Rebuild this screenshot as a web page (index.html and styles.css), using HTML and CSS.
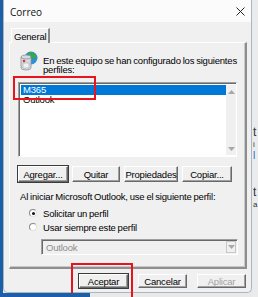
FILE: index.html
```html
<!DOCTYPE html>
<html lang="es">
<head>
<meta charset="utf-8">
<title>Correo</title>
<link rel="stylesheet" href="styles.css">
</head>
<body>
<div class="screen">
  <div class="dialog">
    <div class="titlebar">
      <span class="title">Correo</span>
      <svg class="close" width="9" height="9" viewBox="0 0 9 9"><path d="M0.5 0.5L8.5 8.5M8.5 0.5L0.5 8.5" stroke="#222" stroke-width="1"/></svg>
    </div>
    <div class="body">
      <div class="tabs"><div class="tab">General</div></div>
      <div class="panel">
        <div class="intro">
          <svg class="icon" width="20" height="22" viewBox="0 0 20 22">
            <circle cx="13" cy="8" r="6.5" fill="#2f8fd0"/>
            <path d="M9 3 C12 4 13 7 11 9 C14 9 16 7 18 9 C19 6 17 3 13 2 Z" fill="#3aa84a"/>
            <path d="M3 7 Q3 5 8 5 Q13 5 13 7 L13 18 Q13 20 8 20 Q3 20 3 18 Z" fill="#d7dbe0" stroke="#8c9399" stroke-width="0.8"/>
            <path d="M3 7 Q3 9 8 9 Q13 9 13 7" fill="none" stroke="#8c9399" stroke-width="0.8"/>
            <circle cx="6" cy="11" r="1.3" fill="#e0302a"/>
            <rect x="5" y="13" width="6" height="5" fill="#eef0f2" stroke="#9aa1a8" stroke-width="0.5"/>
          </svg>
          <div class="intro-text">En este equipo se han configurado los siguientes perfiles:</div>
        </div>
        <div class="listbox">
          <div class="items">
            <div class="item selected">M365</div>
            <div class="item">Outlook</div>
          </div>
          <div class="scrollbar">
            <svg width="7" height="4" viewBox="0 0 7 4"><path d="M0 4L3.5 0L7 4Z" fill="#a8a8a8"/></svg>
            <svg width="7" height="4" viewBox="0 0 7 4"><path d="M0 0L3.5 4L7 0Z" fill="#a8a8a8"/></svg>
          </div>
        </div>
        <div class="btnrow">
          <button class="btn focus w50">Agregar...</button>
          <button class="btn w48">Quitar</button>
          <button class="btn w54">Propiedades</button>
          <button class="btn w50">Copiar...</button>
        </div>
        <div class="label">Al iniciar Microsoft Outlook, use el siguiente perfil:</div>
        <div class="radio"><span class="dot checked"></span>Solicitar un perfil</div>
        <div class="radio"><span class="dot"></span>Usar siempre este perfil</div>
        <div class="combo">
          <span class="combo-text">Outlook</span>
          <span class="combo-btn"><svg width="7" height="4" viewBox="0 0 7 4"><path d="M0 0L3.5 4L7 0Z" fill="#a8a8a8"/></svg></span>
        </div>
      </div>
      <div class="footer">
        <button class="btn default w49">Aceptar</button>
        <button class="btn w49">Cancelar</button>
        <button class="btn disabled w49">Aplicar</button>
      </div>
    </div>
  </div>
  <div class="behind">
    <span class="frag f1">t</span>
    <span class="frag f2">i</span>
    <span class="frag f3">l</span>
    <span class="frag f4">t</span>
    <span class="frag f5">a</span>
  </div>
  <div class="mark mark-list"></div>
  <div class="mark mark-ok"></div>
</div>
</body>
</html>
```

FILE: styles.css
```css
* { box-sizing: border-box; }
html, body { margin: 0; padding: 0; }
body {
  font-family: "Liberation Sans", Arial, sans-serif;
  font-size: 9.5px;
  letter-spacing: -0.2px;
  word-spacing: -0.5px;
  color: #000;
  background: #e8e8e8;
}
.screen {
  position: relative;
  width: 258px;
  height: 297px;
  overflow: hidden;
  display: flex;
  align-items: flex-start;
  padding-left: 3px;
  background: linear-gradient(to right, #1d5fa6 0 3px, #e9e9e9 3px);
}
.screen::after {
  content: "";
  position: absolute;
  left: 0;
  bottom: 0;
  width: 90px;
  height: 4px;
  background: #1d5fa6;
}
.dialog {
  width: 249px;
  height: 293px;
  background: #f0f0f0;
  border: 1px solid #a9b6c4;
  border-top: none;
  border-radius: 0 0 5px 5px;
  display: flex;
  flex-direction: column;
}
.titlebar {
  height: 22px;
  background: #fbfbfb;
  display: flex;
  align-items: center;
  justify-content: space-between;
  padding: 1px 6px 0 6px;
}
.title {
  font-family: "Open Sans", "Noto Sans", sans-serif;
  font-size: 10px;
  letter-spacing: 0;
  color: #111;
}
.close { display: block; }
.body {
  padding: 6px 4px 0 5px;
  display: flex;
  flex-direction: column;
}
.tabs {
  display: flex;
  padding-left: 2px;
  height: 14px;
}
.tab {
  width: 39px;
  height: 15px;
  background: #f0f0f0;
  border: 1px solid #fff;
  border-right: 2px solid #8a8a8a;
  border-bottom: none;
  padding: 2px 0 0 2px;
  position: relative;
  z-index: 1;
}
.panel {
  width: 238px;
  height: 227px;
  border-top: 1px solid #fff;
  border-left: 1px solid #fff;
  border-right: 2px solid #8e8e8e;
  border-bottom: 2px solid #8e8e8e;
  box-shadow: inset -1px -1px 0 #c8c8c8;
  padding: 6px 0 0 8px;
  display: flex;
  flex-direction: column;
}
.intro {
  display: flex;
  gap: 5px;
  height: 28px;
}
.icon { flex: none; margin-top: 1px; }
.intro-text {
  width: 200px;
  padding-top: 7px;
  line-height: 9px;
}
.listbox {
  margin-top: 5px;
  width: 219px;
  height: 75px;
  background: #fff;
  border-top: 1px solid #a0a0a0;
  border-left: 1px solid #a0a0a0;
  border-right: 1px solid #fff;
  border-bottom: 1px solid #fff;
  box-shadow: inset 1px 1px 0 #696969;
  display: flex;
  padding: 2px 0 1px 2px;
}
.items { flex: 1; }
.item {
  height: 10px;
  line-height: 10px;
  padding-left: 2px;
}
.item.selected {
  background: #0078d7;
  color: #fff;
}
.scrollbar {
  width: 10px;
  background: #f0f0f0;
  display: flex;
  flex-direction: column;
  align-items: center;
  justify-content: space-between;
  padding: 5px 0 4px;
}
.scrollbar svg { display: block; }
.btnrow {
  display: flex;
  gap: 4px;
  margin-top: 9px;
}
.btn {
  font: inherit;
  letter-spacing: inherit;
  color: #000;
  height: 16px;
  padding: 0;
  background: #f0f0f0;
  border-top: 1px solid #fff;
  border-left: 1px solid #fff;
  border-right: 1px solid #696969;
  border-bottom: 1px solid #696969;
  box-shadow: inset -1px -1px 0 #a0a0a0;
  border-radius: 0;
  line-height: 13px;
}
.btn.focus, .btn.default {
  outline: 1px solid #3c3c3c;
}
.btn.disabled { color: #a3a3a3; }
.w48 { width: 48px; }
.w49 { width: 49px; }
.w50 { width: 50px; }
.w54 { width: 54px; }
.label {
  margin-top: 10px;
  margin-left: 2px;
  line-height: 10px;
}
.radio {
  display: flex;
  align-items: center;
  gap: 6px;
  height: 10px;
  margin-top: 6px;
  margin-left: 11px;
}
.radio + .radio { margin-top: 4px; }
.dot {
  width: 8px;
  height: 8px;
  border-radius: 50%;
  background: #fff;
  border: 1px solid #8a8a8a;
  border-right-color: #e0e0e0;
  border-bottom-color: #e0e0e0;
  display: flex;
  align-items: center;
  justify-content: center;
}
.dot.checked::after {
  content: "";
  width: 3px;
  height: 3px;
  border-radius: 50%;
  background: #111;
}
.combo {
  margin-top: 7px;
  margin-left: 23px;
  width: 197px;
  height: 16px;
  background: #f0f0f0;
  border-top: 1px solid #a0a0a0;
  border-left: 1px solid #a0a0a0;
  border-right: 1px solid #fff;
  border-bottom: 1px solid #fff;
  box-shadow: inset 1px 1px 0 #696969;
  display: flex;
  align-items: center;
  justify-content: space-between;
  padding: 0 1px 0 4px;
}
.combo-text { color: #8d8d8d; }
.combo-btn {
  width: 10px;
  height: 12px;
  border: 1px solid #c8c8c8;
  display: flex;
  align-items: center;
  justify-content: center;
}
.combo-btn svg { display: block; }
.footer {
  display: flex;
  justify-content: flex-end;
  gap: 10px;
  margin-top: 5px;
  margin-right: 1px;
}
.footer .btn { height: 14px; line-height: 11px; }
.behind {
  flex: 1;
  position: relative;
  height: 297px;
  background: #ebebeb;
  font-size: 10px;
}
.frag { position: absolute; left: 1px; color: #333; }
.f1 { top: 125px; font-size: 12px; }
.f2 { top: 140px; font-size: 8px; }
.f3 { top: 150px; color: #1f6fc5; }
.f4 { top: 185px; font-size: 12px; }
.f5 { top: 200px; font-size: 8px; }
.mark {
  position: absolute;
  border: 2px solid #e8141c;
}
.mark-list { left: 13px; top: 76px; width: 83px; height: 24px; }
.mark-ok { left: 71px; top: 263px; width: 62px; height: 40px; }
```
